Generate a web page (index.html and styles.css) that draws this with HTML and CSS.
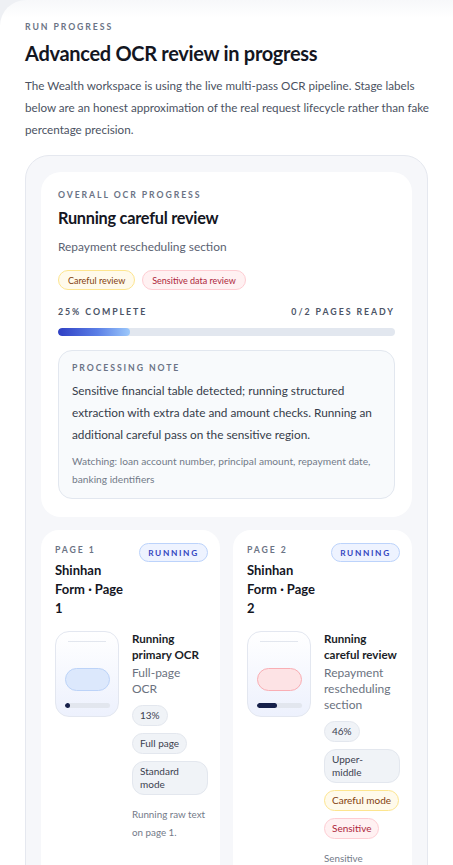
FILE: index.html
```html
<!DOCTYPE html>
<html lang="en">
<head>
<meta charset="utf-8">
<title>Run progress</title>
<link rel="stylesheet" href="styles.css">
</head>
<body>
<main class="panel">
  <div class="eyebrow">Run progress</div>
  <h1 class="title">Advanced OCR review in progress</h1>
  <p class="lede">The Wealth workspace is using the live multi-pass OCR pipeline. Stage labels below are an honest approximation of the real request lifecycle rather than fake percentage precision.</p>

  <section class="board">
    <div class="overall">
      <div class="eyebrow">Overall OCR progress</div>
      <h2 class="overall-title">Running careful review</h2>
      <div class="overall-sub">Repayment rescheduling section</div>
      <div class="tags">
        <span class="tag tag-amber">Careful review</span>
        <span class="tag tag-rose">Sensitive data review</span>
      </div>
      <div class="progress-head">
        <span>25% complete</span>
        <span>0/2 pages ready</span>
      </div>
      <div class="bar"><div class="bar-fill" style="width:21.5%"></div></div>
      <div class="note">
        <div class="eyebrow">Processing note</div>
        <p class="note-body">Sensitive financial table detected; running structured extraction with extra date and amount checks. Running an additional careful pass on the sensitive region.</p>
        <p class="note-watch">Watching: loan account number, principal amount, repayment date, banking identifiers</p>
      </div>
    </div>

    <div class="pages">
      <article class="page-card">
        <header class="page-head">
          <div class="page-meta">
            <div class="eyebrow">Page 1</div>
            <h3 class="page-title">Shinhan Form · Page 1</h3>
          </div>
          <span class="status">Running</span>
        </header>
        <div class="page-body">
          <div class="thumb">
            <span class="thumb-line"></span>
            <span class="thumb-pill thumb-pill-blue"></span>
            <span class="thumb-bar"><span class="thumb-fill" style="width:13%"></span></span>
          </div>
          <div class="page-info">
            <div class="stage">Running primary OCR</div>
            <div class="stage-sub">Full-page OCR</div>
            <div class="chips">
              <span class="chip">13%</span>
              <span class="chip">Full page</span>
              <span class="chip">Standard mode</span>
            </div>
            <p class="page-note">Running raw text on page 1.</p>
          </div>
        </div>
      </article>

      <article class="page-card">
        <header class="page-head">
          <div class="page-meta">
            <div class="eyebrow">Page 2</div>
            <h3 class="page-title">Shinhan Form · Page 2</h3>
          </div>
          <span class="status">Running</span>
        </header>
        <div class="page-body">
          <div class="thumb">
            <span class="thumb-line"></span>
            <span class="thumb-pill thumb-pill-rose"></span>
            <span class="thumb-bar"><span class="thumb-fill" style="width:46%"></span></span>
          </div>
          <div class="page-info">
            <div class="stage">Running careful review</div>
            <div class="stage-sub">Repayment rescheduling section</div>
            <div class="chips">
              <span class="chip">46%</span>
              <span class="chip">Upper-middle</span>
              <span class="chip chip-amber">Careful mode</span>
              <span class="chip chip-rose">Sensitive</span>
            </div>
            <p class="page-note">Sensitive</p>
          </div>
        </div>
      </article>
    </div>
  </section>
</main>
</body>
</html>
```
FILE: styles.css
```css
* { box-sizing: border-box; }

html, body {
  margin: 0;
  padding: 0;
}

body {
  background: #eef0f4;
  font-family: "Lato", "Liberation Sans", sans-serif;
  color: #111827;
  overflow: hidden;
}

.panel {
  background: linear-gradient(to bottom, #f7f8fa 0, #ffffff 18px);
  border-top-left-radius: 26px;
  padding: 21px 0 40px 25px;
  min-height: 865px;
}

.eyebrow {
  font-size: 8.7px;
  line-height: 12px;
  font-weight: 700;
  letter-spacing: 0.22em;
  text-transform: uppercase;
  color: #6b7385;
}

.title {
  margin: 7px 0 0 0;
  font-size: 20px;
  line-height: 26px;
  font-weight: 700;
  letter-spacing: -0.015em;
  color: #14161f;
}

.lede {
  margin: 9px 0 0 0;
  width: 405px;
  font-size: 11.65px;
  line-height: 22px;
  color: #4b5262;
}

.board {
  margin-top: 14px;
  width: 403px;
  background: #f6f7fa;
  border: 1px solid #e5e8ef;
  border-radius: 24px;
  padding: 16px 15px 16px 15px;
}

.overall {
  background: #ffffff;
  border-radius: 20px;
  padding: 17px 17px 18px 17px;
}

.overall-title {
  margin: 6px 0 0 0;
  font-size: 16.3px;
  line-height: 22px;
  font-weight: 700;
  letter-spacing: -0.015em;
  color: #14161f;
}

.overall-sub {
  margin-top: 10px;
  font-size: 11.9px;
  line-height: 16px;
  color: #5b6272;
}

.tags {
  display: flex;
  gap: 7px;
  margin-top: 15px;
}

.tag {
  display: inline-flex;
  align-items: center;
  height: 20px;
  padding: 0 9px;
  border-radius: 999px;
  font-size: 9px;
  border: 1px solid;
}

.tag-amber {
  background: #fffaeb;
  border-color: #fde58f;
  color: #833f0e;
}

.tag-rose {
  background: #fff1f2;
  border-color: #fecdd3;
  color: #ad1f3b;
}

.progress-head {
  display: flex;
  justify-content: space-between;
  margin-top: 16px;
  font-size: 8.8px;
  line-height: 12px;
  font-weight: 700;
  letter-spacing: 0.22em;
  text-transform: uppercase;
  color: #4b5466;
}

.bar {
  margin-top: 10px;
  height: 8px;
  border-radius: 999px;
  background: #e2e7ef;
  overflow: hidden;
}

.bar-fill {
  height: 100%;
  border-radius: 999px;
  background: linear-gradient(to right, #2f40c4, #5b7fe6 55%, #9cc8fb);
}

.note {
  margin-top: 14px;
  background: #f8fafc;
  border: 1px solid #e2e7ef;
  border-radius: 14px;
  padding: 11px 13px 10px 13px;
}

.note-body {
  margin: 6px 0 0 0;
  font-size: 11.8px;
  line-height: 22px;
  color: #363c4a;
}

.note-watch {
  margin: 6px 0 0 0;
  font-size: 10.2px;
  line-height: 18px;
  color: #737a89;
}

.pages {
  display: grid;
  grid-template-columns: 1fr 1fr;
  gap: 13px;
  margin-top: 13px;
}

.page-card {
  background: #ffffff;
  border-radius: 18px;
  padding: 14px 12px 20px 14px;
  min-height: 360px;
}

.page-head {
  display: flex;
  justify-content: space-between;
  align-items: flex-start;
  gap: 8px;
}

.page-meta {
  flex: 1;
  min-width: 0;
}

.page-title {
  margin: 5px 0 0 0;
  font-size: 13px;
  line-height: 19px;
  font-weight: 700;
  color: #14161f;
}

.status {
  flex: none;
  display: inline-flex;
  align-items: center;
  justify-content: center;
  width: 69px;
  height: 19px;
  margin-top: -1px;
  border-radius: 999px;
  background: #eef3ff;
  border: 1px solid #bcd3fb;
  color: #3446c0;
  font-size: 8.3px;
  font-weight: 700;
  letter-spacing: 0.2em;
  text-transform: uppercase;
}

.page-body {
  display: flex;
  gap: 13px;
  margin-top: 13px;
}

.thumb {
  flex: none;
  width: 64px;
  height: 86px;
  border-radius: 14px;
  border: 1px solid #e3e7f0;
  background: linear-gradient(to bottom, #ffffff, #edf1fd);
  display: flex;
  flex-direction: column;
  align-items: center;
  padding-top: 9px;
}

.thumb-line {
  display: block;
  width: 38px;
  height: 1px;
  background: #e2e6ee;
}

.thumb-pill {
  display: block;
  width: 45px;
  height: 23px;
  margin-top: 26px;
  border-radius: 999px;
  border: 1px solid;
}

.thumb-pill-blue {
  background: #dce8fc;
  border-color: #bcd3f8;
}

.thumb-pill-rose {
  background: #fde3e5;
  border-color: #f9aeb4;
}

.thumb-bar {
  display: block;
  width: 45px;
  height: 5px;
  margin-top: 12px;
  border-radius: 999px;
  background: #e2e6ee;
  overflow: hidden;
}

.thumb-fill {
  display: block;
  height: 100%;
  min-width: 5px;
  border-radius: 999px;
  background: #16204a;
}

.page-info {
  flex: 1;
  min-width: 0;
}

.stage {
  font-size: 11.6px;
  line-height: 16px;
  font-weight: 700;
  color: #1a1d27;
}

.stage-sub {
  margin-top: 2px;
  font-size: 12px;
  line-height: 16px;
  color: #6b7280;
}

.chips {
  display: flex;
  flex-direction: column;
  align-items: flex-start;
  gap: 7px;
  margin-top: 8px;
}

.chip {
  display: inline-block;
  max-width: 100%;
  padding: 3px 7px;
  border-radius: 12px;
  background: #f0f3f7;
  border: 1px solid #e3e7ee;
  font-size: 10px;
  line-height: 13px;
  color: #3b4150;
}

.chip-amber {
  background: #fffaeb;
  border-color: #fde58f;
  color: #833f0e;
}

.chip-rose {
  background: #fff1f2;
  border-color: #fecdd3;
  color: #ad1f3b;
}

.page-note {
  margin: 10px 0 0 0;
  font-size: 9.8px;
  line-height: 18px;
  color: #737a89;
}
```
